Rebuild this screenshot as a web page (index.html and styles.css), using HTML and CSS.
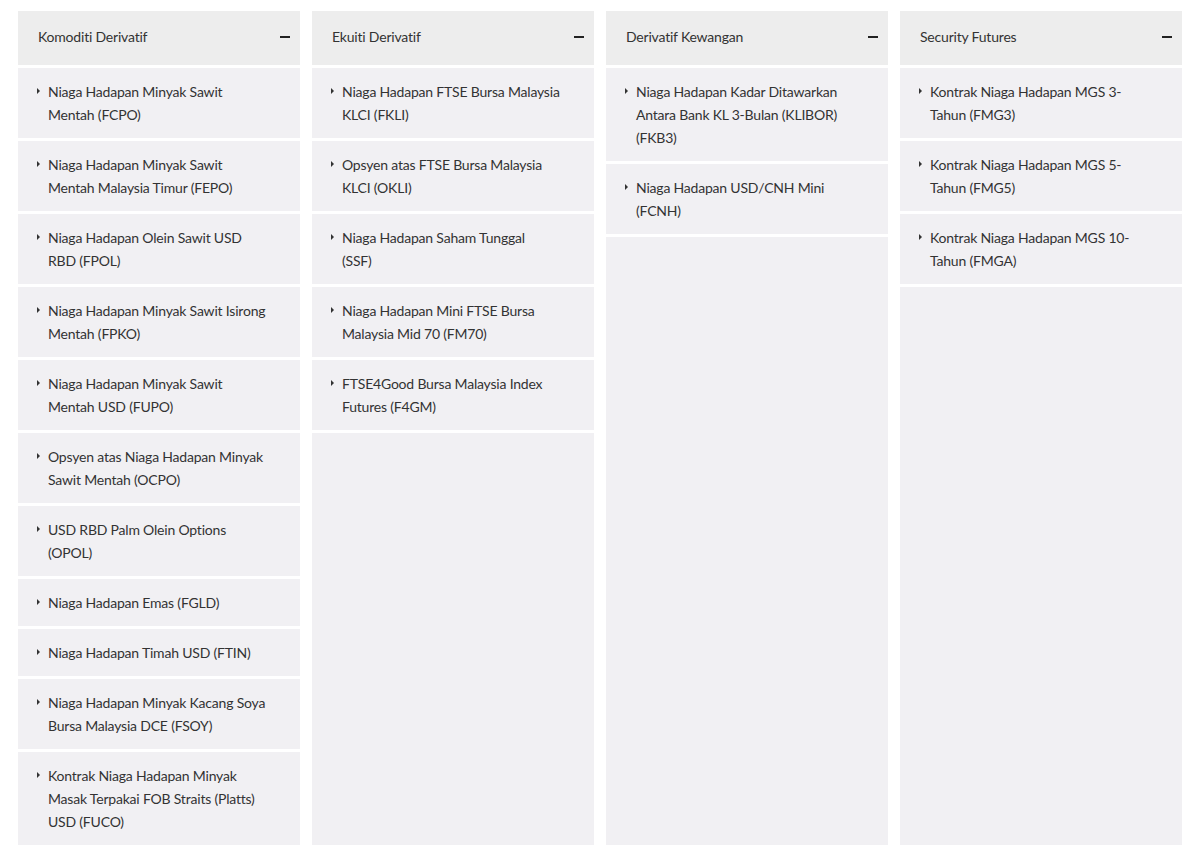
FILE: index.html
```html
<!DOCTYPE html>
<html lang="ms">
<head>
    <meta charset="UTF-8">
    <meta name="viewport" content="width=device-width, initial-scale=1.0">
    <title>Produk Derivatif</title>
    <link rel="stylesheet" href="styles.css">
</head>
<body>
    <div class="produk">
        <div class="kolum">
            <div class="kepala"><span>Komoditi Derivatif</span><i class="tolak"></i></div>
            <a class="item">Niaga Hadapan Minyak Sawit<br>Mentah (FCPO)</a>
            <a class="item">Niaga Hadapan Minyak Sawit<br>Mentah Malaysia Timur (FEPO)</a>
            <a class="item">Niaga Hadapan Olein Sawit USD<br>RBD (FPOL)</a>
            <a class="item">Niaga Hadapan Minyak Sawit Isirong<br>Mentah (FPKO)</a>
            <a class="item">Niaga Hadapan Minyak Sawit<br>Mentah USD (FUPO)</a>
            <a class="item">Opsyen atas Niaga Hadapan Minyak<br>Sawit Mentah (OCPO)</a>
            <a class="item">USD RBD Palm Olein Options<br>(OPOL)</a>
            <a class="item">Niaga Hadapan Emas (FGLD)</a>
            <a class="item">Niaga Hadapan Timah USD (FTIN)</a>
            <a class="item">Niaga Hadapan Minyak Kacang Soya<br>Bursa Malaysia DCE (FSOY)</a>
            <a class="item">Kontrak Niaga Hadapan Minyak<br>Masak Terpakai FOB Straits (Platts)<br>USD (FUCO)</a>
        </div>
        <div class="kolum">
            <div class="kepala"><span>Ekuiti Derivatif</span><i class="tolak"></i></div>
            <a class="item">Niaga Hadapan FTSE Bursa Malaysia<br>KLCI (FKLI)</a>
            <a class="item">Opsyen atas FTSE Bursa Malaysia<br>KLCI (OKLI)</a>
            <a class="item">Niaga Hadapan Saham Tunggal<br>(SSF)</a>
            <a class="item">Niaga Hadapan Mini FTSE Bursa<br>Malaysia Mid 70 (FM70)</a>
            <a class="item">FTSE4Good Bursa Malaysia Index<br>Futures (F4GM)</a>
            <div class="isi"></div>
        </div>
        <div class="kolum">
            <div class="kepala"><span>Derivatif Kewangan</span><i class="tolak"></i></div>
            <a class="item">Niaga Hadapan Kadar Ditawarkan<br>Antara Bank KL 3-Bulan (KLIBOR)<br>(FKB3)</a>
            <a class="item">Niaga Hadapan USD/CNH Mini<br>(FCNH)</a>
            <div class="isi"></div>
        </div>
        <div class="kolum">
            <div class="kepala"><span>Security Futures</span><i class="tolak"></i></div>
            <a class="item">Kontrak Niaga Hadapan MGS 3-<br>Tahun (FMG3)</a>
            <a class="item">Kontrak Niaga Hadapan MGS 5-<br>Tahun (FMG5)</a>
            <a class="item">Kontrak Niaga Hadapan MGS 10-<br>Tahun (FMGA)</a>
            <div class="isi"></div>
        </div>
    </div>
</body>
</html>
```

FILE: styles.css
```css
body {
    margin: 0;
    background: #fff;
    font-family: "Lato", "Open Sans", sans-serif;
    color: #333;
}
.produk {
    display: flex;
    gap: 12px;
    padding: 11px 18px 17px;
    align-items: stretch;
}
.kolum {
    flex: 1;
    display: flex;
    flex-direction: column;
    gap: 3px;
    min-width: 0;
}
.kepala {
    display: flex;
    justify-content: space-between;
    align-items: center;
    height: 51px;
    padding: 0 10px 3px 20px;
    background: #ededed;
    font-size: 14px;
    letter-spacing: -0.2px;
    color: #333;
}
.tolak {
    display: block;
    width: 10px;
    height: 2px;
    margin-top: 1px;
    background: #222;
}
.item {
    position: relative;
    display: block;
    padding: 12px 8px 12px 30px;
    background: #f1f0f3;
    font-size: 14px;
    letter-spacing: -0.2px;
    line-height: 23px;
    color: #333;
    text-decoration: none;
    white-space: nowrap;
}
.item::before {
    content: "";
    position: absolute;
    left: 19px;
    top: 20px;
    border-left: 3px solid #333;
    border-top: 3px solid transparent;
    border-bottom: 3px solid transparent;
}
.isi {
    flex: 1;
    background: #f1f0f3;
}
```
